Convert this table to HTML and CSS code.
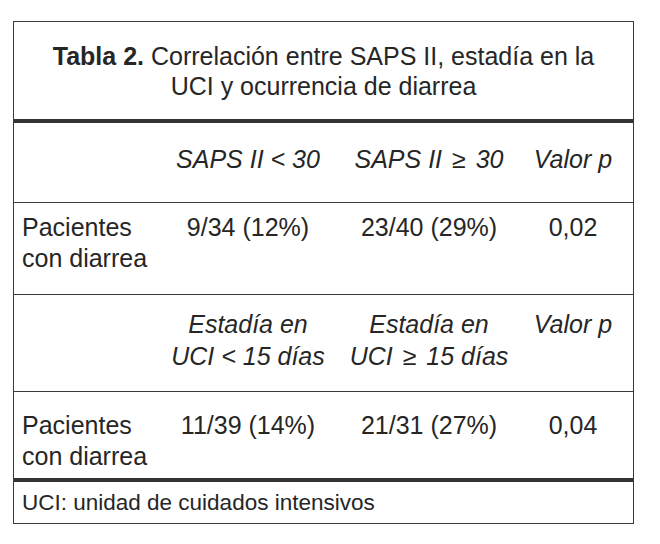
FILE: index.html
```html
<!DOCTYPE html>
<html lang="es">
<head>
<meta charset="utf-8">
<title>Tabla 2</title>
<link rel="stylesheet" href="styles.css">
</head>
<body>
<div class="table">
  <div class="caption"><b>Tabla 2.</b> Correlación entre SAPS II, estadía en la<br>UCI y ocurrencia de diarrea</div>
  <div class="row head head-1">
    <div class="cell label"></div>
    <div class="cell">SAPS II &lt; 30</div>
    <div class="cell">SAPS II <span class="ge">≥</span> 30</div>
    <div class="cell">Valor p</div>
  </div>
  <div class="row data data-1">
    <div class="cell label">Pacientes<br>con diarrea</div>
    <div class="cell">9/34 (12%)</div>
    <div class="cell">23/40 (29%)</div>
    <div class="cell">0,02</div>
  </div>
  <div class="row head head-2">
    <div class="cell label"></div>
    <div class="cell">Estadía en<br>UCI &lt; 15 días</div>
    <div class="cell">Estadía en<br>UCI <span class="ge">≥</span> 15 días</div>
    <div class="cell">Valor p</div>
  </div>
  <div class="row data data-2">
    <div class="cell label">Pacientes<br>con diarrea</div>
    <div class="cell">11/39 (14%)</div>
    <div class="cell">21/31 (27%)</div>
    <div class="cell">0,04</div>
  </div>
  <div class="note">UCI: unidad de cuidados intensivos</div>
</div>
</body>
</html>
```

FILE: styles.css
```css
html, body {
  margin: 0;
  padding: 0;
  background: #ffffff;
}

body {
  font-family: "Liberation Sans", Arial, sans-serif;
  color: #262626;
}

.table {
  box-sizing: border-box;
  width: 621px;
  margin: 21px 0 0 13px;
  border: 1px solid #3a3a3a;
}

.caption {
  font-size: 25px;
  line-height: 30px;
  text-align: center;
  padding: 19px 0 18px;
  border-bottom: 4px solid #333333;
}

.caption b {
  font-weight: bold;
}

.row {
  display: grid;
  grid-template-columns: 137px 194px 168px 120px;
  font-size: 25px;
  border-bottom: 1px solid #3a3a3a;
}

.cell {
  text-align: center;
}

.cell.label {
  text-align: left;
  padding-left: 8px;
}

.ge {
  font-style: normal;
  margin: 0 3px;
}

.head {
  font-style: italic;
}

.head-1 {
  line-height: 31px;
  padding: 21px 0 27px;
}

.data-1 {
  line-height: 31px;
  padding: 9px 0 20px;
}

.head-2 {
  line-height: 32px;
  padding: 13px 0 19px;
}

.data-2 {
  line-height: 31px;
  padding: 18px 0 6px;
  border-bottom: 4px solid #333333;
}

.note {
  font-size: 22.5px;
  line-height: 41px;
  padding-left: 8px;
}
```
